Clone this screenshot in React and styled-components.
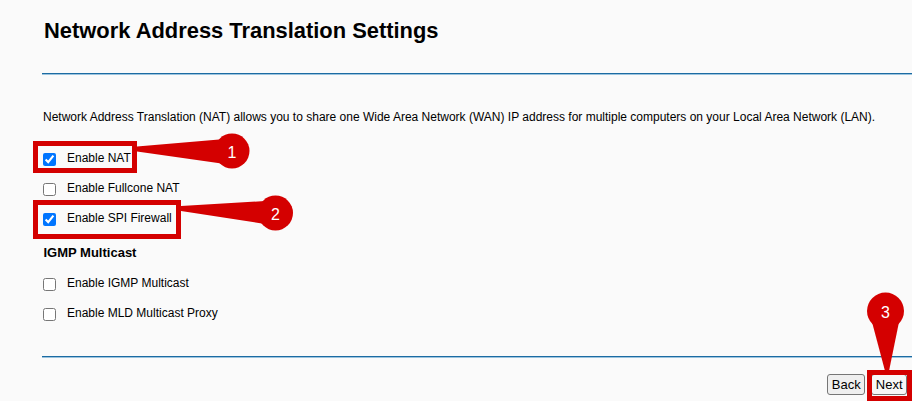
import React from "react";
import styled, { createGlobalStyle } from "styled-components";

const Global = createGlobalStyle`
  html, body { margin: 0; padding: 0; background: #fafafa; }
  body { font-family: "Liberation Sans", Arial, sans-serif; color: #000; }
`;

const Page = styled.div`
  position: relative;
  width: 912px;
  height: 401px;
  overflow: hidden;
  box-sizing: border-box;
  padding: 18px 0 0 42px;
  background: #fafafa;
`;

const Title = styled.h1`
  margin: 0;
  padding-left: 2px;
  font-size: 21.9px;
  line-height: 26px;
  font-weight: bold;
`;

const Divider = styled.div`
  margin-top: ${(p) => p.$top}px;
  height: 1px;
  background: #1c6ba2;
  border-bottom: 1px solid #9cc4de;
`;

const Description = styled.p`
  margin: 35px 0 0;
  padding-left: 1px;
  font-size: 12px;
  line-height: 14px;
`;

const List = styled.div`
  display: flex;
  flex-direction: column;
  margin-top: ${(p) => p.$top}px;
`;

const Row = styled.label`
  display: flex;
  align-items: flex-start;
  height: 30px;
`;

const Check = styled.input.attrs({ type: "checkbox" })`
  width: 13px;
  height: 13px;
  margin: 9px 11px 0 1px;
  flex: none;
`;

const LabelText = styled.span`
  margin-top: 7px;
  font-size: 12px;
  line-height: 14px;
`;

const Heading = styled.h2`
  margin: 11px 0 0;
  padding-left: 1.5px;
  font-size: 13px;
  line-height: 15px;
  font-weight: bold;
`;

const Actions = styled.div`
  display: flex;
  justify-content: flex-end;
  gap: 6px;
  margin-top: 16px;
  padding-right: 5px;
`;

const Button = styled.button`
  font-family: "Liberation Sans", Arial, sans-serif;
  font-size: 13px;
  line-height: 15px;
  padding: 2px 3.5px;
  color: #000;
  background: ${(p) => (p.$light ? "#f7f7f7" : "#efefef")};
  border: 1px solid #767676;
  border-radius: 3px;
`;

const Overlay = styled.svg`
  position: absolute;
  top: 0;
  left: 0;
  pointer-events: none;
`;

const RED = "#d40000";

function Badge({ cx, cy, r, n, points }) {
  return (
    <g>
      <polygon points={points} fill={RED} />
      <circle cx={cx} cy={cy} r={r} fill={RED} />
      <text
        x={cx}
        y={cy + 1}
        fill="#fff"
        fontSize="16"
        fontFamily="Liberation Sans, Arial, sans-serif"
        textAnchor="middle"
        dominantBaseline="central"
      >
        {n}
      </text>
    </g>
  );
}

const options = [
  { label: "Enable NAT", checked: true },
  { label: "Enable Fullcone NAT", checked: false },
  { label: "Enable SPI Firewall", checked: true },
];
const igmp = [
  { label: "Enable IGMP Multicast", checked: false },
  { label: "Enable MLD Multicast Proxy", checked: false },
];

export default function App() {
  return (
    <>
      <Global />
      <Page>
        <Title>Network Address Translation Settings</Title>
        <Divider $top={29} />
        <Description>
          Network Address Translation (NAT) allows you to share one Wide Area Network (WAN) IP address for multiple
          computers on your Local Area Network (LAN).
        </Description>
        <List $top={20}>
          {options.map((o) => (
            <Row key={o.label}>
              <Check defaultChecked={o.checked} />
              <LabelText>{o.label}</LabelText>
            </Row>
          ))}
        </List>
        <Heading>IGMP Multicast</Heading>
        <List $top={9}>
          {igmp.map((o) => (
            <Row key={o.label}>
              <Check defaultChecked={o.checked} />
              <LabelText>{o.label}</LabelText>
            </Row>
          ))}
        </List>
        <Divider $top={27} />
        <Actions>
          <Button>Back</Button>
          <Button $light>Next</Button>
        </Actions>
        <Overlay width="912" height="401" viewBox="0 0 912 401">
          <rect x="35.5" y="143.5" width="99" height="27" fill="none" stroke={RED} strokeWidth="5" />
          <rect x="35.5" y="202.5" width="143" height="34" fill="none" stroke={RED} strokeWidth="5" />
          <rect x="869.5" y="372.5" width="40" height="26" fill="none" stroke={RED} strokeWidth="5" />
          <Badge cx={232} cy={151} r={17.5} n="1" points="137,146.5 137,151.5 225,164 225,139" />
          <Badge cx={275.5} cy={213} r={17.5} n="2" points="181,206 181,211 265,224 265,201" />
          <Badge cx={885.5} cy={311} r={18.5} n="3" points="872,322 899,322 889,371 885,371" />
        </Overlay>
      </Page>
    </>
  );
}
